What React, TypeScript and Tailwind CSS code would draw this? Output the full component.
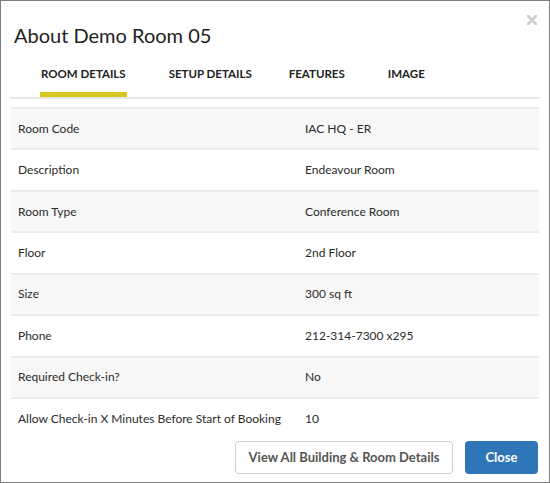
import React from "react";

const rows: [string, string][] = [
  ["Room Code", "IAC HQ - ER"],
  ["Description", "Endeavour Room"],
  ["Room Type", "Conference Room"],
  ["Floor", "2nd Floor"],
  ["Size", "300 sq ft"],
  ["Phone", "212-314-7300 x295"],
  ["Required Check-in?", "No"],
  ["Allow Check-in X Minutes Before Start of Booking", "10"],
];

const tabs = [
  { label: "ROOM DETAILS", cls: "ml-[30px]", active: true },
  { label: "SETUP DETAILS", cls: "ml-[41px]", active: false },
  { label: "FEATURES", cls: "ml-[35px]", active: false },
  { label: "IMAGE", cls: "ml-[41px]", active: false },
];

export default function App() {
  return (
    <div className="relative w-[550px] h-[483px] overflow-hidden bg-white border border-[#7d7d7d] font-['Lato',sans-serif] text-[#2b2b2b]">
      {/* close */}
      <button className="absolute right-[12px] top-[14px] w-[10px] h-[10px]">
        <svg viewBox="0 0 10 10" width="10" height="10">
          <path d="M1 1L9 9M9 1L1 9" stroke="#cdcdcd" strokeWidth="2.6" strokeLinecap="round" />
        </svg>
      </button>

      <h1 className="pt-[20px] pl-[13px] text-[20px] leading-[28px] text-[#222]">About Demo Room 05</h1>

      {/* tabs */}
      <div className="mx-[9px] flex border-b-2 border-[#e8e8e4]">
        {tabs.map((t) => (
          <div key={t.label} className={`${t.cls} flex flex-col`}>
            <span className="pt-[17px] pb-[10px] px-[1px] text-[11.5px] leading-[16px] font-bold text-[#222]">{t.label}</span>
            <span className={t.active ? "h-[5px] bg-[#d6c622]" : "h-[5px]"} />
          </div>
        ))}
      </div>

      {/* details table */}
      <div className="mx-[10px] mt-[8px]">
        {rows.map(([k, v], i) => (
          <div
            key={k}
            className={`grid grid-cols-[287px_1fr] items-center h-[41.43px] px-[7px] text-[12px] border-t-2 border-[#ebebeb] ${
              i % 2 === 0 ? "bg-[#f7f7f7]" : "bg-white"
            }`}
          >
            <span>{k}</span>
            <span>{v}</span>
          </div>
        ))}
      </div>

      {/* footer */}
      <div className="flex justify-end gap-[12px] pr-[11px] mt-[3px]">
        <button className="h-[33px] w-[218px] rounded-[4px] border border-[#cfcfcf] bg-white text-[13px] font-bold text-[#555]">
          View All Building &amp; Room Details
        </button>
        <button className="h-[33px] w-[73px] rounded-[4px] bg-[#2f76b8] text-[13px] font-bold text-white">Close</button>
      </div>
    </div>
  );
}
